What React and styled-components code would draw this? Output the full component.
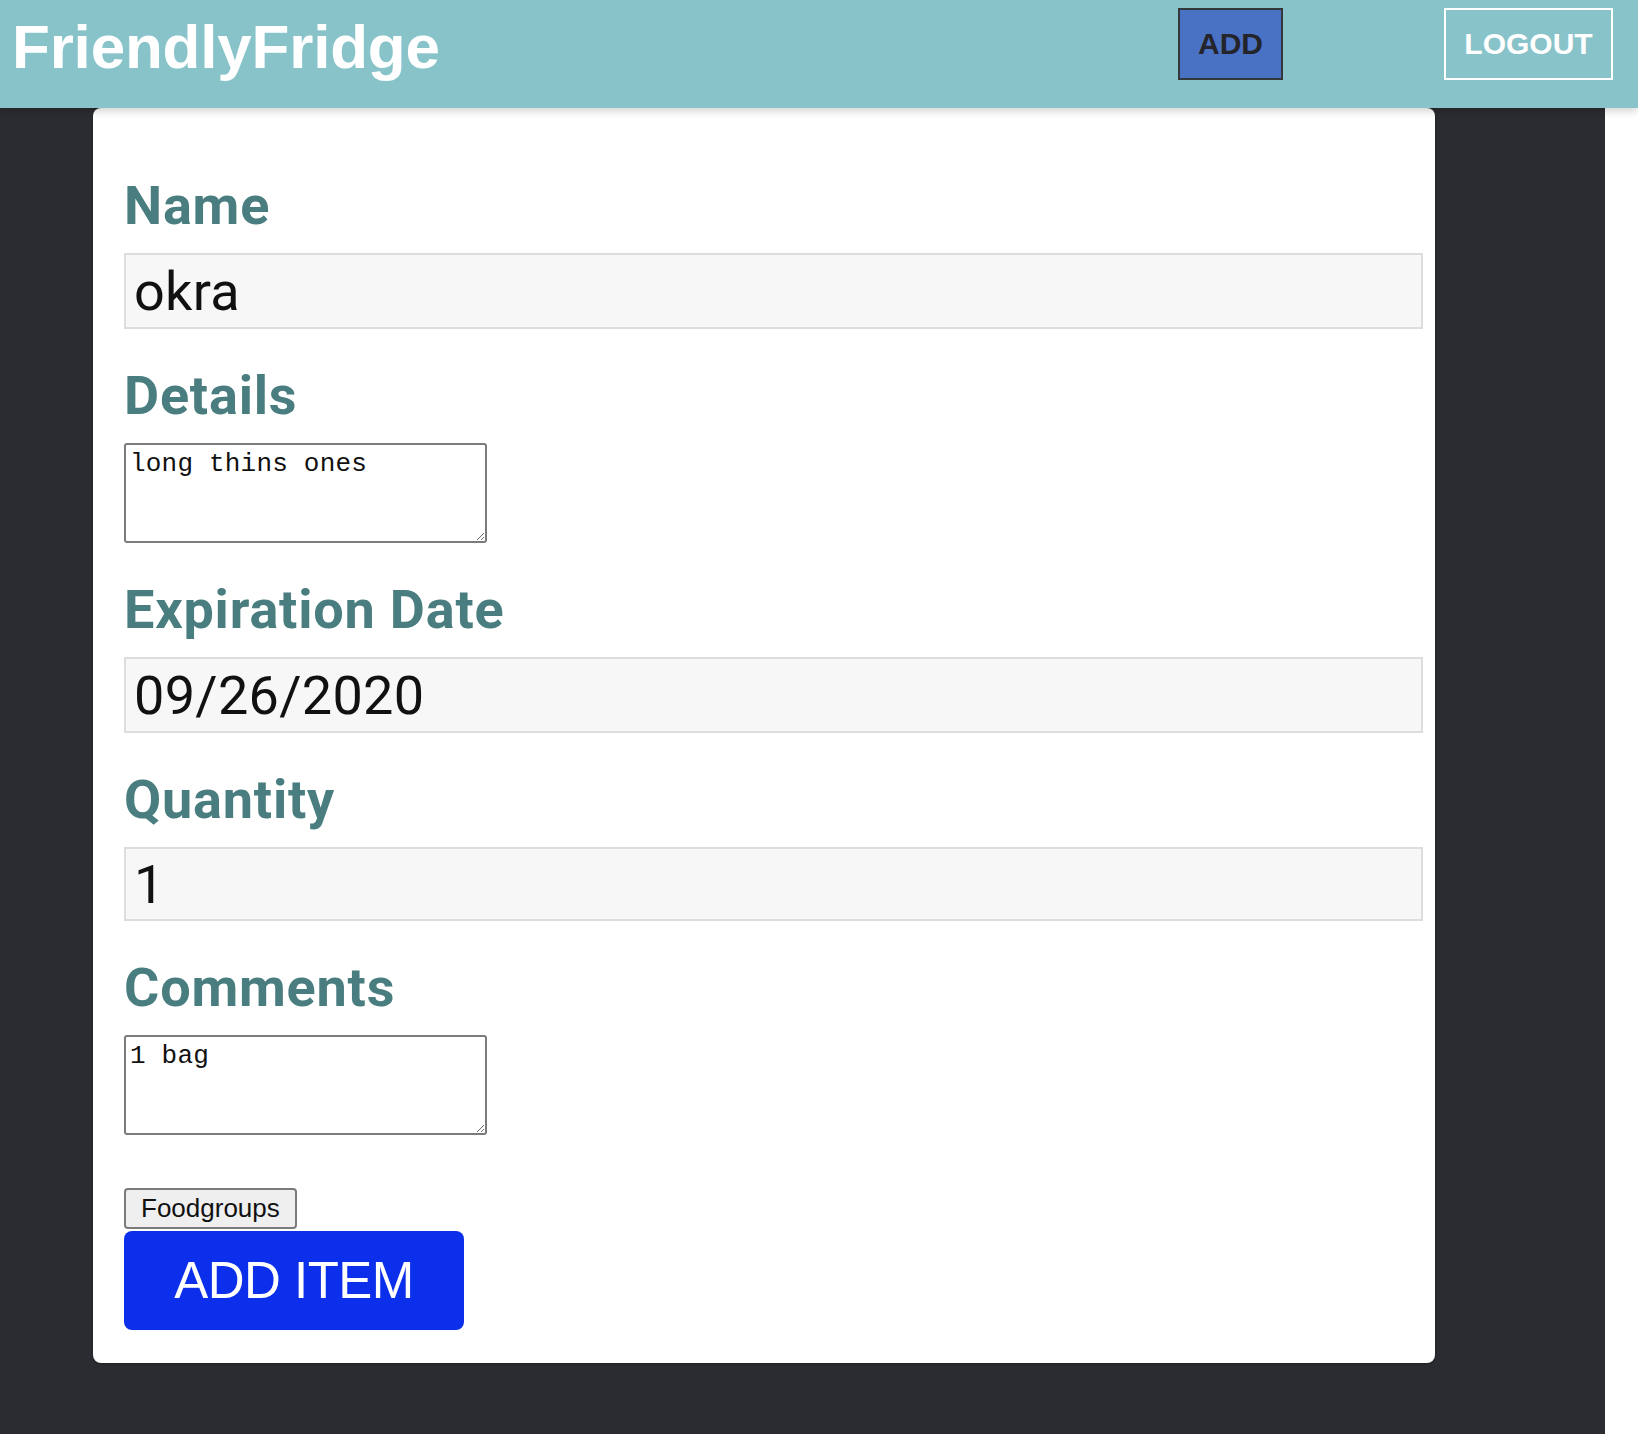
import styled, { createGlobalStyle } from "styled-components";

const GlobalStyle = createGlobalStyle`
  body {
    margin: 0;
    background: #ffffff;
    font-family: "Liberation Sans", Arial, sans-serif;
  }
`;

const Header = styled.header`
  position: relative;
  z-index: 1;
  display: flex;
  align-items: flex-start;
  height: 108px;
  background-color: #88c3ca;
  box-shadow: 0 3px 8px rgba(0, 0, 0, 0.18);
`;

const Brand = styled.h1`
  margin: 16px 0 0 12px;
  font-family: "Liberation Sans", Arial, sans-serif;
  font-size: 62px;
  font-weight: 700;
  line-height: 1;
  letter-spacing: -0.2px;
  color: #ffffff;
`;

const Nav = styled.nav`
  display: flex;
  gap: 161px;
  margin-left: auto;
  padding: 8px 25px 0 0;
`;

const NavButton = styled.button`
  display: flex;
  align-items: center;
  justify-content: center;
  box-sizing: border-box;
  width: ${(p) => (p.$primary ? "105px" : "169px")};
  height: 72px;
  padding: 0;
  border: 2px solid ${(p) => (p.$primary ? "#33363b" : "#ffffff")};
  background-color: ${(p) => (p.$primary ? "#4a72c4" : "transparent")};
  color: ${(p) => (p.$primary ? "#23252a" : "#ffffff")};
  font-family: "Liberation Sans", Arial, sans-serif;
  font-size: 30px;
  font-weight: 700;
  cursor: pointer;
`;

const Main = styled.main`
  box-sizing: border-box;
  width: 1605px;
  min-height: 1326px;
  padding: 0 0 71px 93px;
  background-color: #2a2c31;
`;

const Card = styled.form`
  box-sizing: border-box;
  width: 1342px;
  padding: 71px 12px 33px 31px;
  background: #ffffff;
  border-radius: 8px;
  box-shadow: 0 1px 3px rgba(0, 0, 0, 0.3);
`;

const Label = styled.label`
  display: block;
  margin: 40px 0 20px;
  font-family: Roboto, "Liberation Sans", sans-serif;
  font-size: 54px;
  font-weight: 700;
  line-height: 1;
  letter-spacing: 0.8px;
  color: #4a7d7f;

  &:first-child {
    margin-top: 0;
  }
`;

const TextInput = styled.input`
  display: block;
  box-sizing: border-box;
  width: 100%;
  height: ${(p) => (p.$short ? "74px" : "76px")};
  padding: 0 8px;
  border: 2px solid #dddddd;
  background-color: #f7f7f7;
  font-family: Roboto, "Liberation Sans", sans-serif;
  font-size: 54px;
  letter-spacing: 0.3px;
  color: #111111;
  outline: none;
`;

const Notes = styled.textarea`
  display: block;
  box-sizing: border-box;
  width: 363px;
  height: 100px;
  padding: 4px 4px;
  border: 2px solid #7b7b7b;
  border-radius: 3px;
  background: #ffffff;
  font-family: "Liberation Mono", "Courier New", monospace;
  font-size: 26px;
  letter-spacing: 0.2px;
  color: #111111;
  resize: both;
`;

const SmallButton = styled.button`
  display: block;
  box-sizing: border-box;
  height: 41px;
  margin-top: 53px;
  padding: 0 15px;
  border: 2px solid #7b7b7b;
  border-radius: 4px;
  background-color: #efefef;
  font-family: "Liberation Sans", Arial, sans-serif;
  font-size: 26px;
  color: #111111;
`;

const SubmitButton = styled.button`
  display: block;
  box-sizing: border-box;
  width: 340px;
  height: 99px;
  margin-top: 2px;
  border: none;
  border-radius: 8px;
  background-color: #0b2fea;
  font-family: "Liberation Sans", Arial, sans-serif;
  font-size: 51px;
  color: #ffffff;
  letter-spacing: -0.5px;
  cursor: pointer;
`;

export default function App() {
  return (
    <>
      <GlobalStyle />
      <Header>
        <Brand>FriendlyFridge</Brand>
        <Nav>
          <NavButton $primary>ADD</NavButton>
          <NavButton>LOGOUT</NavButton>
        </Nav>
      </Header>
      <Main>
        <Card onSubmit={(e) => e.preventDefault()}>
          <Label htmlFor="name">Name</Label>
          <TextInput id="name" type="text" defaultValue="okra" />

          <Label htmlFor="details">Details</Label>
          <Notes id="details" defaultValue="long thins ones" />

          <Label htmlFor="expiration">Expiration Date</Label>
          <TextInput id="expiration" type="text" defaultValue="09/26/2020" />

          <Label htmlFor="quantity">Quantity</Label>
          <TextInput id="quantity" type="text" defaultValue="1" $short />

          <Label htmlFor="comments">Comments</Label>
          <Notes id="comments" defaultValue="1 bag" />

          <SmallButton type="button">Foodgroups</SmallButton>
          <SubmitButton type="submit">ADD ITEM</SubmitButton>
        </Card>
      </Main>
    </>
  );
}
